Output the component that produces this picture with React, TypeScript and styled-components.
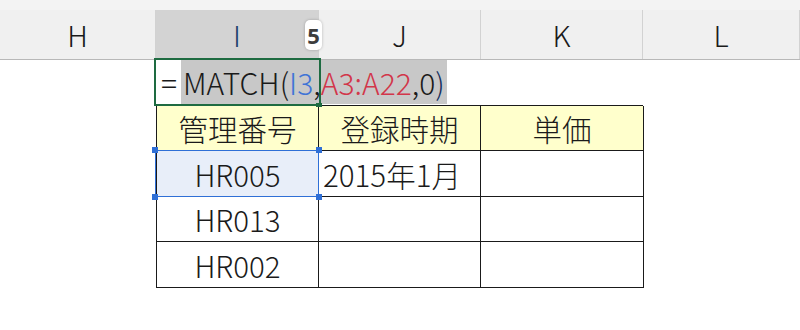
import React from 'react'
import styled, { createGlobalStyle } from 'styled-components'

const GlobalStyle = createGlobalStyle`
  html, body {
    margin: 0;
    padding: 0;
    background: #ffffff;
  }
  body {
    font-family: "Noto Sans CJK JP", "Noto Sans", sans-serif;
    color: #1a1a1a;
  }
`

const COLUMNS = '156px 163px 162px 162px 1fr'

const Sheet = styled.div`
  width: 800px;
  height: 330px;
  overflow: hidden;
  background: #ffffff;
`

const TopStrip = styled.div`
  height: 10px;
  background: #f3f3f3;
`

const HeaderRow = styled.div`
  display: grid;
  grid-template-columns: ${COLUMNS};
  height: 50px;
  background: #f0f0f0;
  border-bottom: 1px solid #b8b8b8;
  box-sizing: border-box;
`

const ColumnHeader = styled.div<{ $selected?: boolean }>`
  position: relative;
  display: flex;
  align-items: center;
  justify-content: center;
  font-size: 29px;
  font-weight: 300;
  color: ${({ $selected }) => ($selected ? '#1d3f6b' : '#1a1a1a')};
  background: ${({ $selected }) => ($selected ? '#d3d3d3' : 'transparent')};
  border-right: 1px solid #d2d2d2;
  padding-bottom: 2px;
`

const CountBadge = styled.div`
  position: absolute;
  right: -4px;
  top: 10px;
  width: 17px;
  height: 30px;
  border-radius: 5px;
  background: #ffffff;
  box-shadow: 0 0 3px rgba(0, 0, 0, 0.25);
  display: flex;
  align-items: center;
  justify-content: center;
  font-family: "Noto Sans", sans-serif;
  font-weight: 700;
  font-size: 22px;
  color: #3d3d3d;
`

const FormulaRow = styled.div`
  position: relative;
  height: 45px;
`

const ActiveCell = styled.div`
  position: absolute;
  left: 154px;
  top: -2px;
  width: 167px;
  height: 48px;
  box-sizing: border-box;
  border: 2.5px solid #1e6b41;
  z-index: 2;
  pointer-events: none;
`

const FillHandle = styled.div`
  position: absolute;
  right: -3px;
  bottom: -3px;
  width: 6px;
  height: 4px;
  background: #1e6b41;
`

const Editor = styled.div`
  position: absolute;
  left: 161px;
  top: 0;
  height: 44px;
  display: flex;
  align-items: center;
  font-size: 30px;
  font-weight: 300;
  white-space: nowrap;
  line-height: 1;
`

const Equals = styled.span`
  width: 20px;
  color: #1a1a1a;
`

const Highlight = styled.span`
  display: flex;
  align-items: center;
  height: 44px;
  padding: 0 2px 0 2px;
  background: #c8c8c8;
`

const Token = styled.span<{ $tone?: 'ref1' | 'ref2' | 'paren' }>`
  color: ${({ $tone }) =>
    $tone === 'ref1' ? '#3f74d6' : $tone === 'ref2' ? '#d2364a' : $tone === 'paren' ? '#16305e' : '#1a1a1a'};
`

const Table = styled.div`
  margin-left: 156px;
  width: 487px;
  display: grid;
  grid-template-columns: 162px 162px 163px;
  grid-template-rows: 45px 46px 45px 46px;
  border-top: 1px solid #1a1a1a;
  border-left: 1px solid #1a1a1a;
  box-sizing: border-box;
`

const Cell = styled.div<{ $head?: boolean; $left?: boolean; $selected?: boolean }>`
  position: relative;
  z-index: ${({ $selected }) => ($selected ? 1 : 0)};
  display: flex;
  align-items: center;
  justify-content: ${({ $left }) => ($left ? 'flex-start' : 'center')};
  padding-left: ${({ $left }) => ($left ? '4px' : '0')};
  border-right: 1px solid #1a1a1a;
  border-bottom: 1px solid #1a1a1a;
  background: ${({ $head, $selected }) => ($head ? '#ffffcc' : $selected ? '#e8eef9' : '#ffffff')};
  font-size: 29.5px;
  font-weight: 300;
  color: #1a1a1a;
  white-space: nowrap;
`

const Selection = styled.div`
  position: absolute;
  left: -2px;
  top: -1px;
  right: -1px;
  bottom: -1px;
  border: 1.5px solid #2f6fd6;
  pointer-events: none;
`

const Handle = styled.span<{ $x: 'l' | 'r'; $y: 't' | 'b' }>`
  position: absolute;
  width: 6px;
  height: 6px;
  background: #2f6fd6;
  ${({ $x }) => ($x === 'l' ? 'left: -4px;' : 'right: -4px;')}
  ${({ $y }) => ($y === 't' ? 'top: -4px;' : 'bottom: -4px;')}
`

const headers = ['H', 'I', 'J', 'K', 'L']
const tableHead = ['管理番号', '登録時期', '単価']
const rows = [
  ['HR005', '2015年1月', ''],
  ['HR013', '', ''],
  ['HR002', '', ''],
]

export default function App() {
  return (
    <Sheet>
      <GlobalStyle />
      <TopStrip />
      <HeaderRow>
        {headers.map(h => (
          <ColumnHeader key={h} $selected={h === 'I'}>
            {h}
            {h === 'I' && <CountBadge>5</CountBadge>}
          </ColumnHeader>
        ))}
      </HeaderRow>
      <FormulaRow>
        <Editor>
          <Equals>=</Equals>
          <Highlight>
            <Token>MATCH(</Token>
            <Token $tone="ref1">I3</Token>
            <Token>,</Token>
            <Token $tone="ref2">A3:A22</Token>
            <Token>,0</Token>
            <Token $tone="paren">)</Token>
          </Highlight>
        </Editor>
        <ActiveCell>
          <FillHandle />
        </ActiveCell>
      </FormulaRow>
      <Table>
        {tableHead.map(t => (
          <Cell key={t} $head>
            {t}
          </Cell>
        ))}
        {rows.map((r, i) =>
          r.map((v, j) => (
            <Cell key={`${i}-${j}`} $left={j === 1} $selected={i === 0 && j === 0}>
              {v}
              {i === 0 && j === 0 && (
                <Selection>
                  <Handle $x="l" $y="t" />
                  <Handle $x="r" $y="t" />
                  <Handle $x="l" $y="b" />
                  <Handle $x="r" $y="b" />
                </Selection>
              )}
            </Cell>
          ))
        )}
      </Table>
    </Sheet>
  )
}
